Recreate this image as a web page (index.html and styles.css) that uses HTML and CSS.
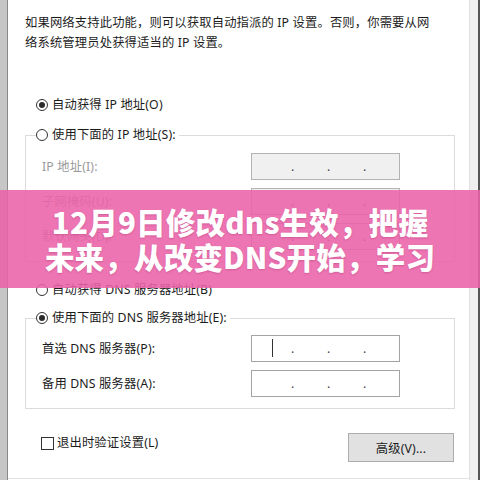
FILE: index.html
```html
<!DOCTYPE html>
<html lang="zh-CN">
<head>
<meta charset="utf-8">
<title>12月9日修改dns生效</title>
<link rel="stylesheet" href="styles.css">
</head>
<body>
<div class="frame">
  <div class="edge-left"></div>
  <div class="dialog">
    <p class="desc">如果网络支持此功能，则可以获取自动指派的 IP 设置。否则，你需要从网<br>络系统管理员处获得适当的 IP 设置。</p>

    <div class="radio-row first"><span class="radio on"></span><span>自动获得 IP 地址(O)</span></div>

    <div class="group">
      <div class="group-head radio-row"><span class="radio"></span><span>使用下面的 IP 地址(S):</span></div>
      <div class="fields">
        <div class="field off"><span class="label">IP 地址(I):</span><div class="box off"><span class="seg">.</span><span class="seg">.</span><span class="seg">.</span></div></div>
        <div class="field off"><span class="label">子网掩码(U):</span><div class="box off"><span class="seg">.</span><span class="seg">.</span><span class="seg">.</span></div></div>
        <div class="field off"><span class="label">默认网关(D):</span><div class="box off"><span class="seg">.</span><span class="seg">.</span><span class="seg">.</span></div></div>
      </div>
    </div>

    <div class="radio-row gap"><span class="radio"></span><span>自动获得 DNS 服务器地址(B)</span></div>

    <div class="group second">
      <div class="group-head radio-row"><span class="radio on"></span><span>使用下面的 DNS 服务器地址(E):</span></div>
      <div class="fields tight">
        <div class="field"><span class="label">首选 DNS 服务器(P):</span><div class="box"><span class="caret"></span><span class="seg">.</span><span class="seg">.</span><span class="seg">.</span></div></div>
        <div class="field"><span class="label">备用 DNS 服务器(A):</span><div class="box"><span class="seg">.</span><span class="seg">.</span><span class="seg">.</span></div></div>
      </div>
    </div>

    <div class="bottom-row">
      <label class="check-row"><span class="checkbox"></span><span>退出时验证设置(L)</span></label>
      <div class="button">高级(V)...</div>
    </div>
  </div>
  <div class="edge-right"><div class="track"></div><div class="rim"></div></div>
</div>

<div class="banner">
  <h1 class="title">12月9日修改dns生效，把握<br>未来，从改变DNS开始，学习</h1>
</div>
</body>
</html>
```

FILE: styles.css
```css
* { box-sizing: border-box; }

html, body {
  margin: 0;
  height: 480px;
  overflow: hidden;
}

body {
  position: relative;
  background: #fff;
  color: #1c1c1c;
  font-family: "Noto Sans", "Noto Sans CJK SC", sans-serif;
  font-size: 12.3px;
  letter-spacing: 0.15px;
}

.frame {
  display: flex;
  height: 480px;
}

.edge-left {
  width: 8px;
  background: #c6c6c6;
  border-right: 1px solid #8a8a8a;
}

.edge-right {
  width: 11px;
  display: flex;
}

.edge-right .track {
  flex: 1;
  background: #efefef;
  border-left: 1px solid #e0e0e0;
}

.edge-right .rim {
  width: 2px;
  background: #555;
}

.dialog {
  flex: 1;
  height: 479px;
  padding: 13px 14px 0 17px;
  border-bottom: 1px solid #e3e3e3;
}

.desc {
  margin: 0;
  line-height: 20px;
}

.radio-row {
  display: flex;
  align-items: center;
  gap: 4px;
  height: 20px;
  padding-left: 11px;
  line-height: 20px;
}

.radio-row.first { margin-top: 42px; }
.radio-row.gap { margin-top: 18px; }

.radio {
  width: 12px;
  height: 12px;
  border: 1px solid #333;
  border-radius: 50%;
  background: #fff;
  display: flex;
  align-items: center;
  justify-content: center;
}

.radio.on::after {
  content: "";
  width: 6px;
  height: 6px;
  border-radius: 50%;
  background: #2a2a2a;
}

.group {
  margin-top: 20px;
  border: 1px solid #dcdcdc;
  padding: 0 0 11px 16px;
}

.group.second { margin-top: 18px; }

.group-head {
  width: max-content;
  margin: -11px 0 0 -6px;
  padding: 0 3px 0 0;
  background: #fff;
}

.fields {
  display: flex;
  flex-direction: column;
  gap: 8px;
  margin-top: 8px;
}

.fields.tight { margin-top: 7px; }

.field {
  display: flex;
  align-items: center;
  height: 27px;
}

.label {
  width: 209px;
  line-height: 20px;
}

.field.off .label { color: #9a9a9a; }

.box {
  position: relative;
  width: 149px;
  height: 27px;
  border: 1px solid #a4a4a4;
  background: #fff;
  display: flex;
  align-items: center;
  padding-left: 39px;
  color: #444;
  letter-spacing: 0;
}

.box.off {
  background: #f0f0f0;
  border-color: #b3b3b3;
}

.seg {
  width: 36px;
  line-height: 20px;
}

.caret {
  position: absolute;
  left: 20px;
  top: 3px;
  width: 1px;
  height: 18px;
  background: #333;
}

.bottom-row {
  display: flex;
  justify-content: space-between;
  align-items: flex-start;
  width: 430px;
  margin-top: 24px;
  padding-left: 16px;
}

.check-row {
  display: flex;
  align-items: center;
  gap: 3px;
  height: 20px;
  line-height: 20px;
}

.checkbox {
  width: 13px;
  height: 13px;
  border: 1px solid #333;
  background: #fff;
}

.button {
  width: 106px;
  height: 29px;
  margin-right: 1px;
  background: #e1e1e1;
  border: 1px solid #adadad;
  display: flex;
  align-items: center;
  justify-content: center;
}

.banner {
  position: absolute;
  left: 0;
  top: 190px;
  width: 480px;
  height: 98px;
  background: rgba(236, 98, 168, 0.88);
  display: flex;
  align-items: center;
  justify-content: center;
}

.title {
  margin: 0;
  color: #fff;
  font-family: "Noto Sans CJK SC", sans-serif;
  font-weight: 900;
  font-size: 29.5px;
  line-height: 35px;
  letter-spacing: 0.2px;
  text-align: center;
  text-shadow: 0 1px 2px rgba(120, 20, 70, 0.25);
}
```
